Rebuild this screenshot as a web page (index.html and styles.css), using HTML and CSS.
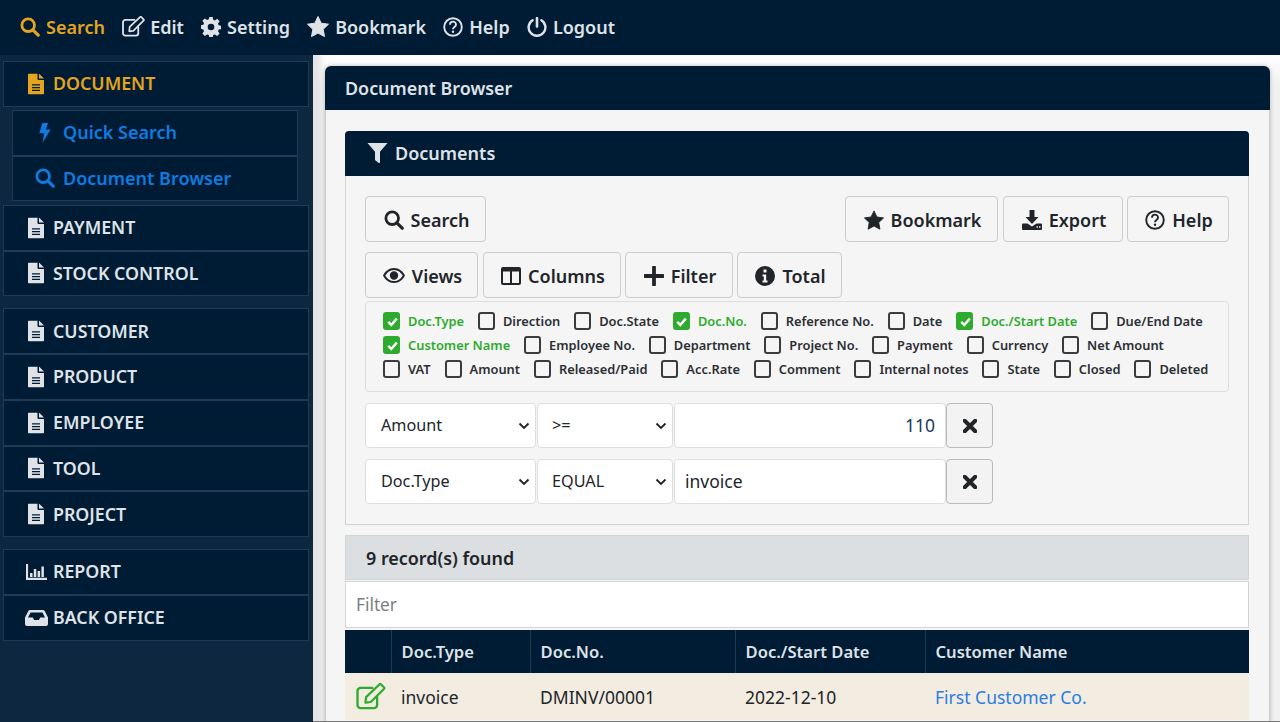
FILE: index.html
```html
<!DOCTYPE html>
<html lang="en">
<head>
  <meta charset="UTF-8">
  <title>Document Browser</title>
  <meta name="viewport" content="width=device-width, initial-scale=1.0">
  <link rel="stylesheet" href="styles.css">
</head>
<body>
<svg class="sprite" xmlns="http://www.w3.org/2000/svg">
  <symbol id="i-search" viewBox="0 0 20 20"><circle cx="8.2" cy="8.2" r="6.3" fill="none" stroke="currentColor" stroke-width="2.8"/><path d="M12.8 12.8L18.2 18.2" stroke="currentColor" stroke-width="3.2" stroke-linecap="round"/></symbol>
  <symbol id="i-edit" viewBox="0 0 24 22"><path d="M17 11.5V18a2.5 2.5 0 0 1-2.5 2.500H3.500A2.500 2.500 0 0 1 1 18V6.500A2.500 2.500 0 0 1 3.500 4H13" fill="none" stroke="currentColor" stroke-width="1.900" stroke-linecap="round"/><path d="M8 11.500L18.800 1.200a1 1 0 0 1 1.400 0l2.300 2.300a1 1 0 0 1 0 1.400L11.800 15.500 7.500 16z" fill="none" stroke="currentColor" stroke-width="1.800" stroke-linejoin="round"/></symbol>
  <symbol id="i-cog" viewBox="0 0 20 20"><path fill-rule="evenodd" d="M8.300 0h3.400l.5 2.700 1.700.7 2.300-1.600 2.400 2.400-1.600 2.300.7 1.700 2.700.5v3.400l-2.700.5-.7 1.700 1.600 2.300-2.400 2.400-2.300-1.600-1.700.7-.5 2.700H8.300l-.5-2.700-1.700-.7-2.300 1.600-2.400-2.400 1.600-2.300-.7-1.700L-.4 11.700V8.300l2.700-.5.7-1.700-1.600-2.300 2.400-2.400 2.300 1.600 1.700-.7zM10 6.700a3.300 3.300 0 1 0 0 6.600 3.300 3.300 0 0 0 0-6.600z" fill="currentColor"/></symbol>
  <symbol id="i-star" viewBox="0 0 22 21"><path d="M11 .5l3.200 6.700 7.300 1-5.300 5.100 1.300 7.300L11 17.100l-6.500 3.500 1.300-7.300L.5 8.200l7.300-1z" fill="currentColor" stroke="currentColor" stroke-linejoin="round"/></symbol>
  <symbol id="i-help" viewBox="0 0 20 20"><circle cx="10" cy="10" r="8.800" fill="none" stroke="currentColor" stroke-width="1.900"/><path d="M7 7.700c0-4 6-4 6-.2 0 2.500-3 2.300-3 4.700" fill="none" stroke="currentColor" stroke-width="1.900"/><circle cx="10" cy="14.700" r="1.200" fill="currentColor"/></symbol>
  <symbol id="i-power" viewBox="0 0 20 20"><path d="M5.600 3.200a8.400 8.400 0 1 0 8.800 0" fill="none" stroke="currentColor" stroke-width="2.400" stroke-linecap="round"/><path d="M10 1v8.500" stroke="currentColor" stroke-width="2.600" stroke-linecap="round"/></symbol>
  <symbol id="i-doc" viewBox="0 0 16 21"><path fill-rule="evenodd" d="M1 0h8.500v5.500a1 1 0 0 0 1 1H16V20a1 1 0 0 1-1 1H1a1 1 0 0 1-1-1V1a1 1 0 0 1 1-1zM4 10.800v1.300h8v-1.300zM4 13.500v1.300h8v-1.300zM4 16.200v1.300h8v-1.300z" fill="currentColor"/><path d="M11 0l5 5h-5z" fill="currentColor"/></symbol>
  <symbol id="i-bolt" viewBox="0 0 12 21"><path d="M3.200 0h6L6.900 6.700H12L3.300 21l1.900-10.200H0z" fill="currentColor"/></symbol>
  <symbol id="i-filter" viewBox="0 0 21 20"><path d="M.5 0h20L13 8.700V19a1 1 0 0 1-1.600.8L8.500 17.400a1 1 0 0 1-.5-.8V8.700z" fill="currentColor"/></symbol>
  <symbol id="i-eye" viewBox="0 0 22 15"><path fill-rule="evenodd" d="M11 0c5 0 9 3.300 11 7.500C20 11.700 16 15 11 15S2 11.700 0 7.500C2 3.300 6 0 11 0zm0 1.900c-3.900 0-6.900 2.400-8.700 5.600 1.800 3.200 4.800 5.600 8.700 5.600s6.900-2.400 8.700-5.600C17.900 4.300 14.900 1.900 11 1.900zm0 1.400a4.200 4.200 0 1 1 0 8.400 4.200 4.200 0 0 1 0-8.400z" fill="currentColor"/></symbol>
  <symbol id="i-columns" viewBox="0 0 20 18"><path fill-rule="evenodd" d="M2 0h16a2 2 0 0 1 2 2v14a2 2 0 0 1-2 2H2a2 2 0 0 1-2-2V2a2 2 0 0 1 2-2zm0 4.500V16h7V4.500zm9 0V16h7V4.500z" fill="currentColor"/></symbol>
  <symbol id="i-plus" viewBox="0 0 18 18"><path d="M9 1v16M1 9h16" stroke="currentColor" stroke-width="3.400" stroke-linecap="round"/></symbol>
  <symbol id="i-info" viewBox="0 0 20 20"><path fill-rule="evenodd" d="M10 0a10 10 0 1 1 0 20 10 10 0 0 1 0-20zm-1.500 3.500v3h3v-3zM7.500 8.500v2h1.300v4H7.500v2h5v-2h-1.300v-6z" fill="currentColor"/></symbol>
  <symbol id="i-download" viewBox="0 0 20 20"><path d="M7.500 0h5v7h4L10 14 3.500 7h4z" fill="currentColor"/><path fill-rule="evenodd" d="M1 13.500h4.500L10 16.500l4.500-3H19a1 1 0 0 1 1 1V19a1 1 0 0 1-1 1H1a1 1 0 0 1-1-1v-4.500a1 1 0 0 1 1-1zM14.500 16.300v1.400h1.400v-1.400zM17 16.300v1.400h1.400v-1.400z" fill="currentColor"/></symbol>
  <symbol id="i-times" viewBox="0 0 12 12"><path d="M1.500 1.500l9 9M10.500 1.500l-9 9" stroke="currentColor" stroke-width="3.400" stroke-linecap="round"/></symbol>
  <symbol id="i-chart" viewBox="0 0 21 16"><path d="M1 0v14.800h20" fill="none" stroke="currentColor" stroke-width="2.200"/><path d="M4 9h2.500v4H4zM7.800 5h2.500v8H7.800zM11.600 7h2.500v6h-2.500zM15.400 2.500h2.500V13h-2.500z" fill="currentColor"/></symbol>
  <symbol id="i-inbox" viewBox="0 0 23 16"><path fill-rule="evenodd" d="M5 0h13a2 2 0 0 1 1.700 1L23 7.500V14a2 2 0 0 1-2 2H2a2 2 0 0 1-2-2V7.500L3.300 1A2 2 0 0 1 5 0zm.6 2.500L3 7.500h4.800l1.300 2.500h4.800l1.300-2.500H20l-2.600-5z" fill="currentColor"/></symbol>
  <symbol id="i-tick" viewBox="0 0 18 18"><path d="M4.500 9.500l3.200 3.200 5.800-6.700" fill="none" stroke="currentColor" stroke-width="2.600"/></symbol>
</svg>

<header class="topbar">
  <a class="nav-item active"><svg class="ico"><use href="#i-search"/></svg>Search</a>
  <a class="nav-item"><svg class="ico s-edit"><use href="#i-edit"/></svg>Edit</a>
  <a class="nav-item"><svg class="ico"><use href="#i-cog"/></svg>Setting</a>
  <a class="nav-item"><svg class="ico s22"><use href="#i-star"/></svg>Bookmark</a>
  <a class="nav-item"><svg class="ico"><use href="#i-help"/></svg>Help</a>
  <a class="nav-item"><svg class="ico"><use href="#i-power"/></svg>Logout</a>
</header>

<div class="layout">
  <aside class="sidebar">
    <div class="side-group">
      <a class="side-item active"><svg class="side-ico doc"><use href="#i-doc"/></svg>DOCUMENT</a>
      <div class="side-sub">
        <a class="sub-item"><svg class="side-ico bolt"><use href="#i-bolt"/></svg>Quick Search</a>
        <a class="sub-item"><svg class="side-ico lens"><use href="#i-search"/></svg>Document Browser</a>
      </div>
      <a class="side-item"><svg class="side-ico doc"><use href="#i-doc"/></svg>PAYMENT</a>
      <a class="side-item"><svg class="side-ico doc"><use href="#i-doc"/></svg>STOCK CONTROL</a>
    </div>
    <div class="side-group">
      <a class="side-item"><svg class="side-ico doc"><use href="#i-doc"/></svg>CUSTOMER</a>
      <a class="side-item"><svg class="side-ico doc"><use href="#i-doc"/></svg>PRODUCT</a>
      <a class="side-item"><svg class="side-ico doc"><use href="#i-doc"/></svg>EMPLOYEE</a>
      <a class="side-item"><svg class="side-ico doc"><use href="#i-doc"/></svg>TOOL</a>
      <a class="side-item"><svg class="side-ico doc"><use href="#i-doc"/></svg>PROJECT</a>
    </div>
    <div class="side-group">
      <a class="side-item"><svg class="side-ico chart"><use href="#i-chart"/></svg>REPORT</a>
      <a class="side-item"><svg class="side-ico inbox"><use href="#i-inbox"/></svg>BACK OFFICE</a>
    </div>
  </aside>

  <main class="content">
    <section class="panel">
      <h1 class="panel-title">Document Browser</h1>
      <div class="panel-body">
        <h2 class="card-title"><svg class="card-ico"><use href="#i-filter"/></svg>Documents</h2>
        <div class="card-body">
          <div class="btn-row">
            <button class="btn b-search"><svg class="btn-ico"><use href="#i-search"/></svg>Search</button>
            <div class="btn-right">
              <button class="btn b-bookmark"><svg class="btn-ico"><use href="#i-star"/></svg>Bookmark</button>
              <button class="btn b-export"><svg class="btn-ico"><use href="#i-download"/></svg>Export</button>
              <button class="btn b-help"><svg class="btn-ico"><use href="#i-help"/></svg>Help</button>
            </div>
          </div>
          <div class="btn-row second">
            <button class="btn b-views"><svg class="btn-ico eye"><use href="#i-eye"/></svg>Views</button>
            <button class="btn b-columns"><svg class="btn-ico"><use href="#i-columns"/></svg>Columns</button>
            <button class="btn b-filter"><svg class="btn-ico"><use href="#i-plus"/></svg>Filter</button>
            <button class="btn b-total"><svg class="btn-ico"><use href="#i-info"/></svg>Total</button>
          </div>

          <div class="cols">
            <div class="cols-row">
              <label class="chk on"><span class="box"><svg><use href="#i-tick"/></svg></span>Doc.Type</label>
              <label class="chk"><span class="box"></span>Direction</label>
              <label class="chk"><span class="box"></span>Doc.State</label>
              <label class="chk on"><span class="box"><svg><use href="#i-tick"/></svg></span>Doc.No.</label>
              <label class="chk"><span class="box"></span>Reference No.</label>
              <label class="chk"><span class="box"></span>Date</label>
              <label class="chk on"><span class="box"><svg><use href="#i-tick"/></svg></span>Doc./Start Date</label>
              <label class="chk"><span class="box"></span>Due/End Date</label>
            </div>
            <div class="cols-row">
              <label class="chk on"><span class="box"><svg><use href="#i-tick"/></svg></span>Customer Name</label>
              <label class="chk"><span class="box"></span>Employee No.</label>
              <label class="chk"><span class="box"></span>Department</label>
              <label class="chk"><span class="box"></span>Project No.</label>
              <label class="chk"><span class="box"></span>Payment</label>
              <label class="chk"><span class="box"></span>Currency</label>
              <label class="chk"><span class="box"></span>Net Amount</label>
            </div>
            <div class="cols-row">
              <label class="chk"><span class="box"></span>VAT</label>
              <label class="chk"><span class="box"></span>Amount</label>
              <label class="chk"><span class="box"></span>Released/Paid</label>
              <label class="chk"><span class="box"></span>Acc.Rate</label>
              <label class="chk"><span class="box"></span>Comment</label>
              <label class="chk"><span class="box"></span>Internal notes</label>
              <label class="chk"><span class="box"></span>State</label>
              <label class="chk"><span class="box"></span>Closed</label>
              <label class="chk"><span class="box"></span>Deleted</label>
            </div>
          </div>

          <div class="filter-row">
            <select class="fld f-col"><option>Amount</option></select>
            <select class="fld f-op"><option>&gt;=</option></select>
            <input class="fld f-val num" type="text" value="110">
            <button class="x-btn"><svg><use href="#i-times"/></svg></button>
          </div>
          <div class="filter-row">
            <select class="fld f-col"><option>Doc.Type</option></select>
            <select class="fld f-op"><option>EQUAL</option></select>
            <input class="fld f-val" type="text" value="invoice">
            <button class="x-btn"><svg><use href="#i-times"/></svg></button>
          </div>
        </div>

        <div class="found">9 record(s) found</div>
        <input class="table-filter" type="text" placeholder="Filter">
        <table class="grid">
          <thead>
            <tr>
              <th class="c0"></th>
              <th class="c1">Doc.Type</th>
              <th class="c2">Doc.No.</th>
              <th class="c3">Doc./Start Date</th>
              <th>Customer Name</th>
            </tr>
          </thead>
          <tbody>
            <tr>
              <td class="edit-cell"><svg class="row-edit"><use href="#i-edit"/></svg></td>
              <td>invoice</td>
              <td>DMINV/00001</td>
              <td>2022-12-10</td>
              <td><a class="link">First Customer Co.</a></td>
            </tr>
          </tbody>
        </table>
      </div>
    </section>
  </main>
</div>
</body>
</html>
```

FILE: styles.css
```css
* {
  box-sizing: border-box;
}
html, body {
  margin: 0;
  height: 722px;
  overflow: hidden;
}
body {
  font-family: "Noto Sans", "Open Sans", sans-serif;
  font-size: 17px;
  color: #212529;
  background: #fff;
}
.sprite {
  display: none;
}
svg {
  display: block;
  flex: none;
}

/* top bar */
.topbar {
  height: 55px;
  background: #001b34;
  display: flex;
  align-items: center;
  padding: 0 0 2px 20px;
  gap: 17.2px;
}
.nav-item {
  display: flex;
  align-items: center;
  gap: 6px;
  font-size: 18px;
  font-weight: 600;
  color: #dfe3e8;
}
.nav-item.active {
  color: #e3a41f;
}
.ico {
  width: 20px;
  height: 20px;
}
.s22 {
  width: 22px;
  height: 21px;
}
.s-edit {
  width: 23px;
  height: 21px;
  margin-right: -1px;
}

/* sidebar */
.layout {
  display: flex;
  height: 667px;
}
.sidebar {
  width: 313px;
  flex: none;
  background: #0e2740;
  padding: 6px 4px 0 3px;
}
.side-group {
  margin-bottom: 12px;
}
.side-item, .sub-item {
  display: flex;
  align-items: center;
  height: 45.75px;
  background: #001b34;
  border: 1px solid #1e3a55;
  font-size: 17.8px;
  font-weight: 600;
  color: #dfe3e8;
  padding: 0 0 1px 49px;
  position: relative;
}
.side-item.active {
  color: #e3a41f;
}
.side-sub {
  padding: 3px 11px 3.5px 9px;
}
.sub-item {
  color: #0f7be0;
  font-size: 18px;
  padding-left: 50px;
}
.side-ico {
  position: absolute;
  top: 50%;
  transform: translateY(-50%);
}
.side-ico.doc {
  left: 24px;
  width: 16px;
  height: 21px;
}
.side-ico.bolt {
  left: 26px;
  width: 12px;
  height: 20px;
}
.side-ico.lens {
  left: 22px;
  width: 20px;
  height: 20px;
}
.side-ico.chart {
  left: 22px;
  width: 21px;
  height: 16px;
}
.side-ico.inbox {
  left: 21px;
  width: 23px;
  height: 16px;
}

/* main area */
.content {
  flex: 1;
  padding: 11px 10px 0 12px;
  background: linear-gradient(#fff, #f1f1f1 30px);
  box-shadow: inset 12px 0 5px -4px #e4e4e4;
  border-bottom: 1px solid #777;
  overflow: hidden;
}
.panel {
  box-shadow: 0 0 4px rgba(0, 0, 0, .25);
  border-radius: 6px 6px 0 0;
}
.panel-title {
  margin: 0;
  height: 44px;
  line-height: 44px;
  padding-left: 20px;
  background: #001b34;
  color: #dfe3e8;
  font-size: 17.9px;
  font-weight: 600;
  border-radius: 6px 6px 0 0;
}
.panel-body {
  background: #f5f5f5;
  padding: 21px 20px 0 19px;
  height: 700px;
  border: 1px solid #ccc;
  border-top: 0;
}
.card-title {
  margin: 0;
  height: 45px;
  display: flex;
  align-items: center;
  gap: 7px;
  padding: 0 0 2px 22px;
  background: #001b34;
  color: #dfe3e8;
  font-size: 18px;
  font-weight: 600;
  border-radius: 4px 4px 0 0;
}
.card-ico {
  width: 21px;
  height: 20px;
}
.card-body {
  height: 349px;
  border: 1px solid #d2d2d2;
  border-top: 0;
  padding: 20px 19px 0;
}

/* buttons */
.btn-row {
  display: flex;
  justify-content: space-between;
  height: 46px;
}
.btn-row.second {
  justify-content: flex-start;
  gap: 5px;
  margin-top: 10px;
}
.btn-right {
  display: flex;
  gap: 5px;
}
.btn {
  display: flex;
  align-items: center;
  justify-content: center;
  gap: 7px;
  height: 46px;
  padding: 1px 0 0 2px;
  background: #f5f5f5;
  border: 1px solid #ccc;
  border-radius: 4px;
  font-family: inherit;
  font-size: 18px;
  font-weight: 600;
  color: #212529;
}
.btn-ico {
  width: 20px;
  height: 20px;
}
.btn-ico.eye {
  width: 22px;
  height: 15px;
}
.b-search { width: 121px; }
.b-bookmark { width: 153px; }
.b-export { width: 120px; margin-right: -1px; }
.b-help { width: 102px; }
.b-views { width: 113px; }
.b-columns { width: 138px; }
.b-filter { width: 108px; margin-left: -1px; }
.b-total { width: 105px; margin-left: -1px; }

/* column checkboxes */
.cols {
  margin-top: 3px;
  height: 91px;
  border: 1px solid #ddd;
  border-radius: 4px;
  padding: 7px 0 0 17px;
}
.cols-row {
  display: flex;
  gap: 13.9px;
  height: 24px;
  align-items: center;
}
.chk {
  display: flex;
  align-items: center;
  gap: 8px;
  font-size: 12.85px;
  font-weight: 600;
  color: #2b2f33;
}
.chk.on {
  color: #2eab2e;
}
.box {
  width: 17px;
  height: 18px;
  border: 2px solid #3a3d40;
  border-radius: 3px;
  background: #f5f5f5;
}
.chk.on .box {
  background: #2eab2e;
  border-color: #2eab2e;
  color: #fff;
}
.box svg {
  width: 17px;
  height: 17px;
  margin: -1.500px;
}

/* filter rows */
.filter-row {
  display: flex;
  height: 45px;
  margin-top: 11px;
  gap: 1px;
}
.fld {
  height: 100%;
  padding-bottom: 2px;
  border: 1px solid #dedede;
  border-radius: 4px;
  background: #fff;
  font-family: inherit;
  color: #212529;
}
select.fld {
  appearance: none;
  padding-left: 15px;
  font-size: 16.2px;
  background: #fff url("data:image/svg+xml,%3Csvg xmlns='http://www.w3.org/2000/svg' width='12' height='8'%3E%3Cpath d='M1.500 1.500L6 6l4.500-4.500' fill='none' stroke='%23222' stroke-width='1.800'/%3E%3C/svg%3E") no-repeat right 5px center;
}
select.f-op {
  padding-left: 14px;
}
.f-col { width: 171px; }
.f-op { width: 136px; }
.f-val {
  width: 272px;
  padding: 0 10px 2px;
  font-size: 17.5px;
}
.f-val.num {
  text-align: right;
  color: #1c3a5c;
}
.x-btn {
  width: 47px;
  height: 100%;
  margin-left: -1px;
  padding: 0;
  display: flex;
  align-items: center;
  justify-content: center;
  background: #f3f3f3;
  border: 1px solid #bbb;
  border-radius: 4px;
  color: #212529;
}
.x-btn svg {
  width: 14px;
  height: 14px;
}

/* results */
.found {
  margin-top: 10px;
  height: 45px;
  line-height: 44px;
  padding-left: 20px;
  background: #dcdfe2;
  border: 1px solid #d2d4d6;
  font-size: 17.9px;
  font-weight: 600;
}
.table-filter {
  display: block;
  width: 100%;
  height: 47px;
  margin-top: 1px;
  padding: 0 10px;
  background: #fff;
  border: 1px solid #d4d4d4;
  font-family: inherit;
  font-size: 17.3px;
}
.table-filter::placeholder {
  color: #7a7f85;
}
.grid {
  width: 100%;
  margin-top: 2px;
  border-collapse: collapse;
  table-layout: fixed;
  font-size: 17.5px;
}
.grid th {
  height: 43px;
  padding: 0 10px;
  background: #001b34;
  color: #dfe3e8;
  font-size: 16.6px;
  font-weight: 600;
  text-align: left;
  border-left: 1px solid #1e3a55;
}
.grid th:first-child {
  border-left: 0;
}
.grid td {
  height: 47px;
  padding: 0 10px;
  background: #f3ece1;
}
.c0 { width: 46px; }
.c1 { width: 139px; }
.c2 { width: 205px; }
.c3 { width: 190px; }
.grid .edit-cell {
  padding-left: 11px;
  color: #2eab2e;
}
.row-edit {
  width: 30px;
  height: 27px;
}
.link {
  color: #2a7de1;
}
```
